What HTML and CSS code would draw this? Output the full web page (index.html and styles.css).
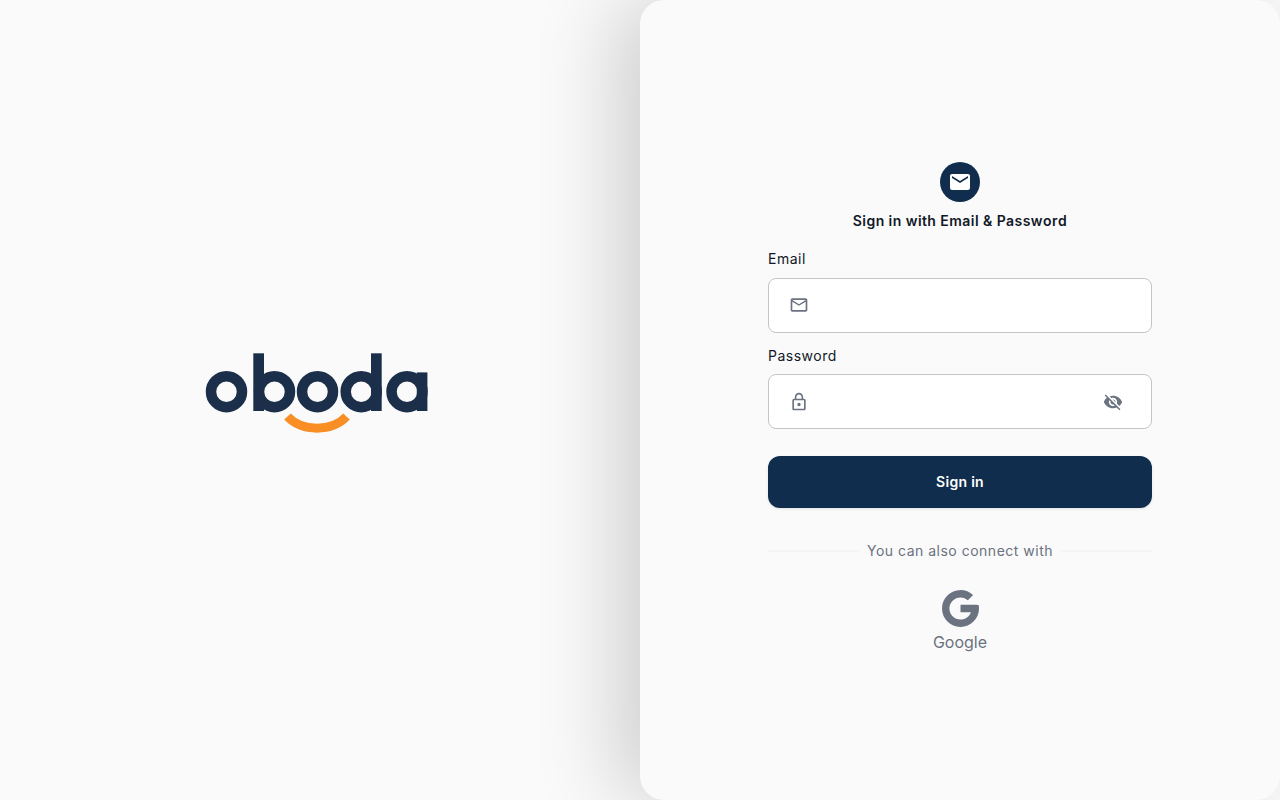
FILE: index.html
```html
<!DOCTYPE html>
<html lang="en">
<head>
<meta charset="utf-8">
<title>Oboda - Sign in</title>
<link rel="stylesheet" href="styles.css">
</head>
<body>
<main class="page">
  <section class="brand">
    <svg class="logo" viewBox="0 0 240 100" role="img" aria-label="oboda">
      <g class="logo-bowls">
        <circle cx="26.5" cy="41.7" r="15.5"/>
        <circle cx="74.5" cy="41.7" r="15.5"/>
        <circle cx="117.5" cy="41.7" r="15.5"/>
        <circle cx="161.2" cy="41.7" r="15.5"/>
        <circle cx="207" cy="41.7" r="15.5"/>
      </g>
      <g class="logo-stems">
        <rect x="53.3" y="3.3" width="10.7" height="57.7"/>
        <rect x="171" y="3.3" width="10.7" height="57.7"/>
        <rect x="216.8" y="22.4" width="10.6" height="38.6"/>
      </g>
      <path class="logo-smile" d="M87.5 66.5C102 82 132 82 146.5 66.5"/>
    </svg>
  </section>
  <section class="panel">
    <form class="form">
      <div class="badge">
        <svg class="badge-icon" viewBox="0 0 24 24"><path d="M20 4H4c-1.1 0-1.99.9-1.99 2L2 18c0 1.1.9 2 2 2h16c1.1 0 2-.9 2-2V6c0-1.1-.9-2-2-2zm0 4l-8 5-8-5V6l8 5 8-5v2z"/></svg>
      </div>
      <h1 class="title">Sign in with Email &amp; Password</h1>
      <label class="label" for="email">Email</label>
      <div class="field">
        <svg class="icon icon-mail" viewBox="0 0 24 24"><path d="M20 4H4c-1.1 0-1.99.9-1.99 2L2 18c0 1.1.9 2 2 2h16c1.1 0 2-.9 2-2V6c0-1.1-.9-2-2-2zm0 14H4V8l8 5 8-5v10zm-8-7L4 6h16l-8 5z"/></svg>
        <input class="input" id="email" type="email">
      </div>
      <label class="label label-password" for="password">Password</label>
      <div class="field">
        <svg class="icon" viewBox="0 0 24 24"><path d="M12 17c1.1 0 2-.9 2-2s-.9-2-2-2-2 .9-2 2 .9 2 2 2zm6-9h-1V6c0-2.76-2.24-5-5-5S7 3.24 7 6v2H6c-1.1 0-2 .9-2 2v10c0 1.1.9 2 2 2h12c1.1 0 2-.9 2-2V10c0-1.1-.9-2-2-2zM8.9 6c0-1.71 1.39-3.1 3.1-3.1s3.1 1.39 3.1 3.1v2H8.9V6zM18 20H6V10h12v10z"/></svg>
        <input class="input" id="password" type="password">
        <svg class="icon icon-eye" viewBox="0 0 24 24"><path d="M12 7c2.76 0 5 2.24 5 5 0 .65-.13 1.26-.36 1.83l2.92 2.92c1.51-1.26 2.7-2.89 3.43-4.75-1.73-4.39-6-7.5-11-7.5-1.4 0-2.74.25-3.98.7l2.16 2.16C10.74 7.13 11.35 7 12 7zM2 4.27l2.28 2.28.46.46C3.08 8.3 1.78 10.02 1 12c1.73 4.39 6 7.5 11 7.5 1.55 0 3.03-.3 4.38-.84l.42.42L19.73 22 21 20.73 3.27 3 2 4.27zM7.53 9.8l1.55 1.55c-.05.21-.08.43-.08.65 0 1.66 1.34 3 3 3 .22 0 .44-.03.65-.08l1.55 1.55c-.67.33-1.41.53-2.2.53-2.76 0-5-2.24-5-5 0-.79.2-1.53.53-2.2zm4.31-.78l3.15 3.15.02-.16c0-1.66-1.34-3-3-3l-.17.01z"/></svg>
      </div>
      <button class="submit" type="button">Sign in</button>
      <div class="divider"><span class="divider-text">You can also connect with</span></div>
      <div class="provider">
        <svg class="google" viewBox="4 4 40 40"><path d="M43.611 20.083H42V20H24v8h11.303c-1.649 4.657-6.08 8-11.303 8-6.627 0-12-5.373-12-12s5.373-12 12-12c3.059 0 5.842 1.154 7.961 3.039l5.657-5.657C34.046 6.053 29.268 4 24 4 12.955 4 4 12.955 4 24s8.955 20 20 20 20-8.955 20-20c0-1.341-.138-2.65-.389-3.917z"/></svg>
        <span class="provider-name">Google</span>
      </div>
    </form>
  </section>
</main>
</body>
</html>
```
FILE: styles.css
```css
* { box-sizing: border-box; }
html, body { margin: 0; height: 100%; }
body {
  background: #fafafa;
  font-family: Inter, "Noto Sans", sans-serif;
  color: #111827;
  overflow: hidden;
}
.page { display: flex; height: 800px; }
.brand {
  flex: 0 0 640px;
  display: flex;
  align-items: center;
  justify-content: center;
}
.logo { display: block; width: 240px; height: 100px; }
.logo-bowls circle { fill: none; stroke: #1b2f4b; stroke-width: 10.5; }
.logo-stems rect { fill: #1b2f4b; }
.logo-smile { fill: none; stroke: #f98e25; stroke-width: 9; }
.panel {
  flex: 0 0 640px;
  height: 800px;
  background: #fafafa;
  border-radius: 24px;
  box-shadow: -25px 0 80px rgba(0, 0, 0, 0.17);
  display: flex;
  justify-content: center;
  padding-top: 162px;
}
.form { width: 384px; display: flex; flex-direction: column; }
.badge {
  width: 40px;
  height: 40px;
  border-radius: 50%;
  background: #112d4e;
  align-self: center;
  display: flex;
  align-items: center;
  justify-content: center;
}
.badge-icon { width: 24px; height: 24px; fill: #fff; }
.title {
  margin: 9px 0 0;
  font-size: 14px;
  line-height: 20px;
  font-weight: 600;
  text-align: center;
  letter-spacing: 0.44px;
  font-kerning: none;
  color: #111827;
}
.label {
  margin-top: 18px;
  font-size: 14px;
  line-height: 20px;
  font-weight: 400;
  letter-spacing: 0.5px;
  color: #111827;
}
.label-password { margin-top: 13px; }
.field {
  margin-top: 9px;
  height: 55px;
  background: #fff;
  border: 1px solid #c4c4c6;
  border-radius: 8px;
  padding: 0 28px 0 20px;
  display: flex;
  align-items: center;
  gap: 8px;
}
.label-password + .field { margin-top: 8px; }
.icon { flex: none; width: 20px; height: 20px; fill: #6b7280; }
.icon-mail { margin-top: -1px; }
.input {
  flex: 1;
  min-width: 0;
  border: 0;
  outline: 0;
  background: transparent;
  font: inherit;
  height: 100%;
}
.submit {
  margin-top: 27px;
  height: 52px;
  padding: 0 0 2px;
  border: 0;
  border-radius: 12px;
  background: #112d4e;
  color: #fff;
  font: inherit;
  font-size: 14px;
  font-weight: 600;
  letter-spacing: 0.3px;
  box-shadow: 0 1px 3px rgba(0, 0, 0, 0.1);
}
.divider {
  margin-top: 33px;
  display: flex;
  align-items: center;
  gap: 8px;
}
.divider::before, .divider::after {
  content: "";
  flex: 1;
  height: 2px;
  background: #f3f4f6;
}
.divider-text {
  font-size: 14px;
  line-height: 20px;
  letter-spacing: 0.5px;
  color: #6b7280;
}
.provider {
  margin-top: 29px;
  display: flex;
  flex-direction: column;
  align-items: center;
  color: #6b7280;
}
.google { display: block; width: 37px; height: 37px; fill: #6b7280; }
.provider-name { margin-top: 3px; font-size: 16px; line-height: 24px; }
```
